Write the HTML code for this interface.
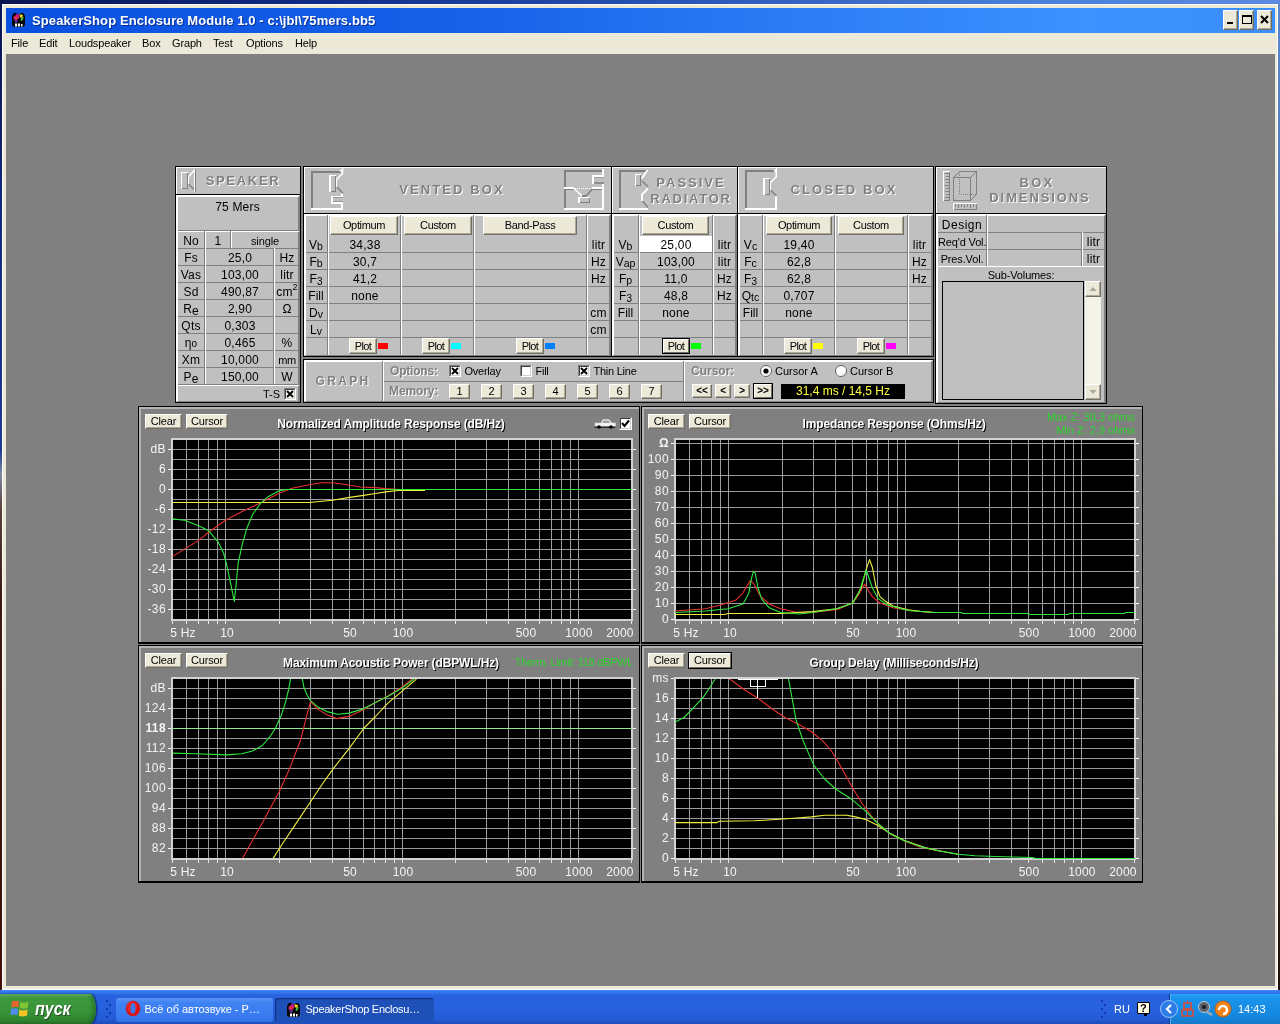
<!DOCTYPE html><html><head><meta charset="utf-8"><title>SpeakerShop Enclosure Module 1.0</title><style>
html,body{margin:0;padding:0;}
body{width:1280px;height:1024px;overflow:hidden;background:#808080;position:relative;
 font-family:"Liberation Sans",sans-serif;font-size:12px;color:#000;}
div{position:absolute;box-sizing:border-box;white-space:nowrap;}
svg{position:absolute;overflow:visible;}
.t{text-align:center;letter-spacing:0.2px;}
.l{text-align:left;}
.r{text-align:right;}
.pn{background:#c0c0c0;border:1px solid #000;}
.pn:before{content:"";position:absolute;left:0;top:0;right:0;bottom:0;border-top:2px solid #fff;border-left:2px solid #fff;border-right:2px solid #808080;border-bottom:1px solid #808080;}
.hd{background:#c0c0c0;border:1px solid #000;}
.hd:before{content:"";position:absolute;left:0;top:0;right:0;bottom:0;border-top:1px solid #fff;border-left:1px solid #fff;}
.btn{background:#ece9d8;border-top:1px solid #fff;border-left:1px solid #fff;border-right:1px solid #716f64;border-bottom:1px solid #716f64;text-align:center;}
.btn:before{content:"";position:absolute;left:0;top:0;right:0;bottom:0;border-right:1px solid #aca899;border-bottom:1px solid #aca899;}
.btnf{background:#ece9d8;border:1px solid #000;text-align:center;}
.btnf:before{content:"";position:absolute;left:0;top:0;right:0;bottom:0;border-top:1px solid #fff;border-left:1px solid #fff;border-right:1px solid #716f64;border-bottom:1px solid #716f64;}
.emb{color:#808080;font-weight:bold;font-size:13px;text-shadow:1px 1px 0 #fff;text-align:center;}
.gp{background:#808080;border:1px solid #000;border-bottom-width:2px;}
.gp:before{content:"";position:absolute;left:0;top:0;right:0;bottom:0;border-top:2px solid #b4b4b4;border-left:2px solid #b4b4b4;}
.gt{color:#fff;font-weight:bold;font-size:12px;letter-spacing:-0.13px;text-shadow:1px 1px 0 #000;text-align:center;}
.ax{color:#f4f4f4;font-size:12px;}
.gr{color:#2cd42c;font-size:11px;}
.hl{background:#808080;height:1px;}
.vl{width:2px;border-left:1px solid #808080;border-right:1px solid #fff;}
.cb{background:#fff;border-top:1px solid #808080;border-left:1px solid #808080;border-right:1px solid #fff;border-bottom:1px solid #fff;}
.cb:before{content:"";position:absolute;left:0;top:0;right:0;bottom:0;border-top:1px solid #404040;border-left:1px solid #404040;border-right:1px solid #d4d0c8;border-bottom:1px solid #d4d0c8;}
</style></head><body><div id="root" style="left:0;top:0;width:1280px;height:1024px;will-change:transform;">
<div style="left:0px;top:0px;width:1280px;height:5px;background:linear-gradient(90deg,#0a1550 0%,#0f2a86 25%,#2a58b8 55%,#4a7fd8 80%,#5a8ae0 100%);"></div>
<div style="left:0px;top:4px;width:3px;height:990px;background:linear-gradient(180deg,#0a1550 0%,#142c80 25%,#1a3a90 45%,#8088a0 47.5%,#584038 51%,#3a1810 60%,#401008 100%);"></div>
<div style="left:1277px;top:4px;width:3px;height:990px;background:linear-gradient(180deg,#5a86d0 0%,#5070b0 30%,#383850 60%,#281810 85%,#201008 100%);"></div>
<div style="left:2px;top:4px;width:1276px;height:986px;background:#ece9d8;border:1px solid #fff;"></div>
<div style="left:6px;top:8px;width:1269px;height:25px;background:linear-gradient(90deg,#0a50e0 0%,#1660e8 35%,#2a7af4 60%,#3c92ff 85%,#3a8ef8 100%);"></div>
<svg style="left:10px;top:11px" width="17" height="17" viewBox="0 0 17 17"><rect x="2" y="3" width="13" height="13" rx="3" fill="#080808"/><circle cx="5" cy="4" r="2.2" fill="#080808"/><circle cx="12" cy="4.5" r="2.4" fill="#080808"/><path d="M3.5 6 L7.5 2.5 L10 5 L7 9.5 L3.5 8.5 Z" fill="#c81890"/><path d="M9.5 3 L13 4 L12.5 7 L10 6.5 Z" fill="#e8d020"/><path d="M4 5.5 L9 6.5 L8 8 L4.5 7.5Z" fill="#e03828"/><path d="M11 7 L14 6 L12 10 L10.5 9.5 Z" fill="#40c040"/><path d="M5 9 L8 10 L7 11.5 L4.5 11Z" fill="#7030c0"/><rect x="5" y="12.5" width="2" height="3" fill="#fff"/><rect x="8" y="12.5" width="2" height="3" fill="#fff"/><rect x="11" y="13" width="1.5" height="2.5" fill="#fff"/></svg>
<div class="l" style="left:32px;top:8px;width:400px;height:25px;line-height:25px;color:#fff;font-weight:bold;font-size:13px;letter-spacing:0.1px;text-shadow:1px 1px 0 rgba(0,20,90,.6);">SpeakerShop Enclosure Module 1.0 - c:\jbl\75mers.bb5</div>
<div class="btn" style="left:1223px;top:10px;width:15px;height:20px;"></div>
<div class="btn" style="left:1239px;top:10px;width:15px;height:20px;"></div>
<div class="btn" style="left:1257px;top:10px;width:15px;height:20px;"></div>
<svg style="left:1223px;top:10px" width="50" height="20" viewBox="0 0 50 20"><rect x="4" y="12" width="6" height="2" fill="#000"/><rect x="19.5" y="5.5" width="9" height="8" fill="none" stroke="#000" stroke-width="1"/><rect x="19" y="5" width="10" height="2" fill="#000"/><path d="M38 6 L45 13 M45 6 L38 13" stroke="#000" stroke-width="2" fill="none"/></svg>
<div style="left:6px;top:33px;width:1269px;height:21px;background:#ece9d8;"></div>
<div style="left:6px;top:54px;width:1269px;height:932px;background:#808080;"></div>
<div class="l" style="left:11px;top:34px;width:16px;height:19px;line-height:19px;font-size:11px;letter-spacing:-0.15px;">File</div>
<div class="l" style="left:39px;top:34px;width:18px;height:19px;line-height:19px;font-size:11px;letter-spacing:-0.15px;">Edit</div>
<div class="l" style="left:69px;top:34px;width:61px;height:19px;line-height:19px;font-size:11px;letter-spacing:-0.15px;">Loudspeaker</div>
<div class="l" style="left:142px;top:34px;width:18px;height:19px;line-height:19px;font-size:11px;letter-spacing:-0.15px;">Box</div>
<div class="l" style="left:172px;top:34px;width:29px;height:19px;line-height:19px;font-size:11px;letter-spacing:-0.15px;">Graph</div>
<div class="l" style="left:213px;top:34px;width:21px;height:19px;line-height:19px;font-size:11px;letter-spacing:-0.15px;">Test</div>
<div class="l" style="left:246px;top:34px;width:37px;height:19px;line-height:19px;font-size:11px;letter-spacing:-0.15px;">Options</div>
<div class="l" style="left:295px;top:34px;width:21px;height:19px;line-height:19px;font-size:11px;letter-spacing:-0.15px;">Help</div>
<div class="hd" style="left:175px;top:166px;width:126px;height:29px;"></div>
<div class="pn" style="left:175px;top:194px;width:126px;height:209px;"></div>
<div class="emb" style="left:203px;top:174px;width:80px;height:14px;line-height:14px;letter-spacing:1.7px;font-size:13px;">SPEAKER</div>
<svg style="left:175px;top:165px" width="30" height="30" viewBox="0 0 30 30"><g shape-rendering="crispEdges"><rect x="6" y="7" width="1" height="17" fill="#fff"/><rect x="6" y="7" width="7" height="1" fill="#fff"/><rect x="12" y="8" width="1" height="16" fill="#808080"/><rect x="7" y="23" width="6" height="1" fill="#808080"/><rect x="13" y="12" width="1" height="7" fill="#fff"/><rect x="19" y="4" width="1" height="23" fill="#fff"/><rect x="20" y="4" width="1" height="23" fill="#808080"/></g><path d="M13.5 12 L19 5.5" stroke="#fff" stroke-width="1.2" fill="none"/><path d="M14 19.5 L19 24.5" stroke="#808080" stroke-width="1.2" fill="none"/></svg>
<div class="t" style="left:177px;top:198px;width:121px;height:18px;line-height:18px;font-size:12px;">75 Mers</div>
<div class="hl" style="left:178px;top:230px;width:121px"></div>
<div style="left:178px;top:231px;width:121px;height:1px;background:#fff;"></div>
<div class="t" style="left:178px;top:233px;width:26px;height:16px;line-height:16px;">No</div>
<div class="t" style="left:206px;top:233px;width:24px;height:16px;line-height:16px;">1</div>
<div class="t" style="left:232px;top:233px;width:66px;height:16px;line-height:16px;font-size:11px;letter-spacing:-0.1px;">single</div>
<div class="hl" style="left:178px;top:248px;width:121px"></div>
<div class="t" style="left:178px;top:250px;width:26px;height:16px;line-height:16px;">Fs</div>
<div class="t" style="left:206px;top:250px;width:68px;height:16px;line-height:16px;">25,0</div>
<div class="t" style="left:275px;top:250px;width:24px;height:16px;line-height:16px;">Hz</div>
<div class="hl" style="left:178px;top:265px;width:121px"></div>
<div class="t" style="left:178px;top:267px;width:26px;height:16px;line-height:16px;">Vas</div>
<div class="t" style="left:206px;top:267px;width:68px;height:16px;line-height:16px;">103,00</div>
<div class="t" style="left:275px;top:267px;width:24px;height:16px;line-height:16px;">litr</div>
<div class="hl" style="left:178px;top:282px;width:121px"></div>
<div class="t" style="left:178px;top:284px;width:26px;height:16px;line-height:16px;">Sd</div>
<div class="t" style="left:206px;top:284px;width:68px;height:16px;line-height:16px;">490,87</div>
<div class="t" style="left:275px;top:284px;width:24px;height:16px;line-height:16px;">cm<sup style='font-size:9px;line-height:0;position:relative;top:-1px'>2</sup></div>
<div class="hl" style="left:178px;top:299px;width:121px"></div>
<div class="t" style="left:178px;top:301px;width:26px;height:16px;line-height:16px;">R<span style='position:relative;top:2px'>e</span></div>
<div class="t" style="left:206px;top:301px;width:68px;height:16px;line-height:16px;">2,90</div>
<div class="t" style="left:275px;top:301px;width:24px;height:16px;line-height:16px;">Ω</div>
<div class="hl" style="left:178px;top:316px;width:121px"></div>
<div class="t" style="left:178px;top:318px;width:26px;height:16px;line-height:16px;">Qts</div>
<div class="t" style="left:206px;top:318px;width:68px;height:16px;line-height:16px;">0,303</div>
<div class="t" style="left:275px;top:318px;width:24px;height:16px;line-height:16px;"></div>
<div class="hl" style="left:178px;top:333px;width:121px"></div>
<div class="t" style="left:178px;top:335px;width:26px;height:16px;line-height:16px;">η<span style='font-size:10px'>o</span></div>
<div class="t" style="left:206px;top:335px;width:68px;height:16px;line-height:16px;">0,465</div>
<div class="t" style="left:275px;top:335px;width:24px;height:16px;line-height:16px;">%</div>
<div class="hl" style="left:178px;top:350px;width:121px"></div>
<div class="t" style="left:178px;top:352px;width:26px;height:16px;line-height:16px;">Xm</div>
<div class="t" style="left:206px;top:352px;width:68px;height:16px;line-height:16px;">10,000</div>
<div class="t" style="left:275px;top:352px;width:24px;height:16px;line-height:16px;"><span style='font-size:11px;letter-spacing:-0.5px'>mm</span></div>
<div class="hl" style="left:178px;top:367px;width:121px"></div>
<div class="t" style="left:178px;top:369px;width:26px;height:16px;line-height:16px;">P<span style='position:relative;top:2px'>e</span></div>
<div class="t" style="left:206px;top:369px;width:68px;height:16px;line-height:16px;">150,00</div>
<div class="t" style="left:275px;top:369px;width:24px;height:16px;line-height:16px;">W</div>
<div class="hl" style="left:178px;top:384px;width:121px"></div>
<div class="vl" style="left:204px;top:231px;height:153px"></div>
<div class="vl" style="left:230px;top:231px;height:17px"></div>
<div class="vl" style="left:273px;top:248px;height:136px"></div>
<div style="left:178px;top:385px;width:121px;height:1px;background:#fff;"></div>
<div class="r" style="left:254px;top:386px;width:26px;height:16px;line-height:16px;font-size:11px;">T-S</div>
<div class="cb" style="left:284px;top:388px;width:12px;height:12px;"></div>
<svg style="left:284px;top:388px" width="12" height="12"><path d="M3 3 L9 9 M9 3 L3 9" stroke="#000" stroke-width="2"/></svg>
<div class="hd" style="left:303px;top:166px;width:309px;height:48px;"></div>
<div class="pn" style="left:303px;top:213px;width:309px;height:144px;"></div>
<div class="emb" style="left:392px;top:183px;width:120px;height:14px;line-height:14px;letter-spacing:2.1px;font-size:13px;">VENTED BOX</div>
<div class="t" style="left:305px;top:237px;width:22px;height:16px;line-height:16px;letter-spacing:0;">V<span style='font-size:10.5px;position:relative;top:1px'>b</span></div>
<div class="t" style="left:330px;top:237px;width:70px;height:16px;line-height:16px;">34,38</div>
<div class="t" style="left:588px;top:237px;width:21px;height:16px;line-height:16px;">litr</div>
<div class="hl" style="left:306px;top:252px;width:303px"></div>
<div class="t" style="left:305px;top:254px;width:22px;height:16px;line-height:16px;letter-spacing:0;">F<span style='font-size:10.5px;position:relative;top:1px'>b</span></div>
<div class="t" style="left:330px;top:254px;width:70px;height:16px;line-height:16px;">30,7</div>
<div class="t" style="left:588px;top:254px;width:21px;height:16px;line-height:16px;">Hz</div>
<div class="hl" style="left:306px;top:269px;width:303px"></div>
<div class="t" style="left:305px;top:271px;width:22px;height:16px;line-height:16px;letter-spacing:0;">F<span style='font-size:10px;position:relative;top:2px'>3</span></div>
<div class="t" style="left:330px;top:271px;width:70px;height:16px;line-height:16px;">41,2</div>
<div class="t" style="left:588px;top:271px;width:21px;height:16px;line-height:16px;">Hz</div>
<div class="hl" style="left:306px;top:286px;width:303px"></div>
<div class="t" style="left:305px;top:288px;width:22px;height:16px;line-height:16px;letter-spacing:0;">Fill</div>
<div class="t" style="left:330px;top:288px;width:70px;height:16px;line-height:16px;">none</div>
<div class="t" style="left:588px;top:288px;width:21px;height:16px;line-height:16px;"></div>
<div class="hl" style="left:306px;top:303px;width:303px"></div>
<div class="t" style="left:305px;top:305px;width:22px;height:16px;line-height:16px;letter-spacing:0;">D<span style='font-size:10.5px;position:relative;top:1px'>v</span></div>
<div class="t" style="left:330px;top:305px;width:70px;height:16px;line-height:16px;"></div>
<div class="t" style="left:588px;top:305px;width:21px;height:16px;line-height:16px;">cm</div>
<div class="hl" style="left:306px;top:320px;width:303px"></div>
<div class="t" style="left:305px;top:322px;width:22px;height:16px;line-height:16px;letter-spacing:0;">L<span style='font-size:10.5px;position:relative;top:1px'>v</span></div>
<div class="t" style="left:330px;top:322px;width:70px;height:16px;line-height:16px;"></div>
<div class="t" style="left:588px;top:322px;width:21px;height:16px;line-height:16px;">cm</div>
<div class="hl" style="left:306px;top:337px;width:303px"></div>
<div class="vl" style="left:327px;top:215px;height:140px"></div>
<div class="vl" style="left:400px;top:215px;height:140px"></div>
<div class="vl" style="left:473px;top:215px;height:140px"></div>
<div class="vl" style="left:586px;top:215px;height:140px"></div>
<div class="btn" style="left:330px;top:216px;width:68px;height:17px;line-height:17px;font-size:11px;letter-spacing:-0.35px;height:19px;">Optimum</div>
<div class="btn" style="left:404px;top:216px;width:68px;height:17px;line-height:17px;font-size:11px;letter-spacing:-0.35px;height:19px;">Custom</div>
<div class="btn" style="left:483px;top:216px;width:94px;height:17px;line-height:17px;font-size:11px;letter-spacing:-0.35px;height:19px;">Band-Pass</div>
<div class="btn" style="left:349px;top:338px;width:28px;height:14px;line-height:14px;font-size:11px;letter-spacing:-0.6px;height:16px;">Plot</div>
<div style="left:378px;top:343px;width:10px;height:6px;background:#ff0000;"></div>
<div class="btn" style="left:422px;top:338px;width:28px;height:14px;line-height:14px;font-size:11px;letter-spacing:-0.6px;height:16px;">Plot</div>
<div style="left:451px;top:343px;width:10px;height:6px;background:#00ffff;"></div>
<div class="btn" style="left:516px;top:338px;width:28px;height:14px;line-height:14px;font-size:11px;letter-spacing:-0.6px;height:16px;">Plot</div>
<div style="left:545px;top:343px;width:10px;height:6px;background:#0080ff;"></div>
<div class="hd" style="left:611px;top:166px;width:127px;height:48px;"></div>
<div class="pn" style="left:611px;top:213px;width:127px;height:144px;"></div>
<div class="emb" style="left:650px;top:176px;width:82px;height:14px;line-height:14px;letter-spacing:2.0px;font-size:13px;">PASSIVE</div>
<div class="emb" style="left:645px;top:192px;width:92px;height:14px;line-height:14px;letter-spacing:1.75px;font-size:13px;">RADIATOR</div>
<div style="left:640px;top:236px;width:72px;height:16px;background:#fff;"></div>
<div class="t" style="left:613px;top:237px;width:25px;height:16px;line-height:16px;letter-spacing:0;">V<span style='font-size:10.5px;position:relative;top:1px'>b</span></div>
<div class="t" style="left:640px;top:237px;width:72px;height:16px;line-height:16px;">25,00</div>
<div class="t" style="left:714px;top:237px;width:21px;height:16px;line-height:16px;">litr</div>
<div class="hl" style="left:614px;top:252px;width:121px"></div>
<div class="t" style="left:613px;top:254px;width:25px;height:16px;line-height:16px;letter-spacing:0;">V<span style='font-size:10.5px;position:relative;top:1px'>ap</span></div>
<div class="t" style="left:640px;top:254px;width:72px;height:16px;line-height:16px;">103,00</div>
<div class="t" style="left:714px;top:254px;width:21px;height:16px;line-height:16px;">litr</div>
<div class="hl" style="left:614px;top:269px;width:121px"></div>
<div class="t" style="left:613px;top:271px;width:25px;height:16px;line-height:16px;letter-spacing:0;">F<span style='font-size:10.5px;position:relative;top:1px'>p</span></div>
<div class="t" style="left:640px;top:271px;width:72px;height:16px;line-height:16px;">11,0</div>
<div class="t" style="left:714px;top:271px;width:21px;height:16px;line-height:16px;">Hz</div>
<div class="hl" style="left:614px;top:286px;width:121px"></div>
<div class="t" style="left:613px;top:288px;width:25px;height:16px;line-height:16px;letter-spacing:0;">F<span style='font-size:10px;position:relative;top:2px'>3</span></div>
<div class="t" style="left:640px;top:288px;width:72px;height:16px;line-height:16px;">48,8</div>
<div class="t" style="left:714px;top:288px;width:21px;height:16px;line-height:16px;">Hz</div>
<div class="hl" style="left:614px;top:303px;width:121px"></div>
<div class="t" style="left:613px;top:305px;width:25px;height:16px;line-height:16px;letter-spacing:0;">Fill</div>
<div class="t" style="left:640px;top:305px;width:72px;height:16px;line-height:16px;">none</div>
<div class="t" style="left:714px;top:305px;width:21px;height:16px;line-height:16px;"></div>
<div class="hl" style="left:614px;top:320px;width:121px"></div>
<div class="t" style="left:613px;top:322px;width:25px;height:16px;line-height:16px;letter-spacing:0;"></div>
<div class="t" style="left:640px;top:322px;width:72px;height:16px;line-height:16px;"></div>
<div class="t" style="left:714px;top:322px;width:21px;height:16px;line-height:16px;"></div>
<div class="hl" style="left:614px;top:337px;width:121px"></div>
<div class="vl" style="left:638px;top:215px;height:140px"></div>
<div class="vl" style="left:712px;top:215px;height:140px"></div>
<div class="btn" style="left:642px;top:216px;width:67px;height:17px;line-height:17px;font-size:11px;letter-spacing:-0.35px;height:19px;">Custom</div>
<div class="btnf" style="left:662px;top:338px;width:28px;height:14px;line-height:14px;font-size:11px;letter-spacing:-0.6px;height:16px;">Plot</div>
<div style="left:691px;top:343px;width:10px;height:6px;background:#00ff00;"></div>
<div class="hd" style="left:737px;top:166px;width:197px;height:48px;"></div>
<div class="pn" style="left:737px;top:213px;width:197px;height:144px;"></div>
<div class="emb" style="left:786px;top:183px;width:116px;height:14px;line-height:14px;letter-spacing:2.1px;font-size:13px;">CLOSED BOX</div>
<div class="t" style="left:739px;top:237px;width:23px;height:16px;line-height:16px;letter-spacing:0;">V<span style='font-size:10.5px;position:relative;top:1px'>c</span></div>
<div class="t" style="left:765px;top:237px;width:68px;height:16px;line-height:16px;">19,40</div>
<div class="t" style="left:909px;top:237px;width:21px;height:16px;line-height:16px;">litr</div>
<div class="hl" style="left:740px;top:252px;width:191px"></div>
<div class="t" style="left:739px;top:254px;width:23px;height:16px;line-height:16px;letter-spacing:0;">F<span style='font-size:10.5px;position:relative;top:1px'>c</span></div>
<div class="t" style="left:765px;top:254px;width:68px;height:16px;line-height:16px;">62,8</div>
<div class="t" style="left:909px;top:254px;width:21px;height:16px;line-height:16px;">Hz</div>
<div class="hl" style="left:740px;top:269px;width:191px"></div>
<div class="t" style="left:739px;top:271px;width:23px;height:16px;line-height:16px;letter-spacing:0;">F<span style='font-size:10px;position:relative;top:2px'>3</span></div>
<div class="t" style="left:765px;top:271px;width:68px;height:16px;line-height:16px;">62,8</div>
<div class="t" style="left:909px;top:271px;width:21px;height:16px;line-height:16px;">Hz</div>
<div class="hl" style="left:740px;top:286px;width:191px"></div>
<div class="t" style="left:739px;top:288px;width:23px;height:16px;line-height:16px;letter-spacing:0;">Q<span style='font-size:10.5px;position:relative;top:1px'>tc</span></div>
<div class="t" style="left:765px;top:288px;width:68px;height:16px;line-height:16px;">0,707</div>
<div class="t" style="left:909px;top:288px;width:21px;height:16px;line-height:16px;"></div>
<div class="hl" style="left:740px;top:303px;width:191px"></div>
<div class="t" style="left:739px;top:305px;width:23px;height:16px;line-height:16px;letter-spacing:0;">Fill</div>
<div class="t" style="left:765px;top:305px;width:68px;height:16px;line-height:16px;">none</div>
<div class="t" style="left:909px;top:305px;width:21px;height:16px;line-height:16px;"></div>
<div class="hl" style="left:740px;top:320px;width:191px"></div>
<div class="t" style="left:739px;top:322px;width:23px;height:16px;line-height:16px;letter-spacing:0;"></div>
<div class="t" style="left:765px;top:322px;width:68px;height:16px;line-height:16px;"></div>
<div class="t" style="left:909px;top:322px;width:21px;height:16px;line-height:16px;"></div>
<div class="hl" style="left:740px;top:337px;width:191px"></div>
<div class="vl" style="left:762px;top:215px;height:140px"></div>
<div class="vl" style="left:834px;top:215px;height:140px"></div>
<div class="vl" style="left:907px;top:215px;height:140px"></div>
<div class="btn" style="left:766px;top:216px;width:66px;height:17px;line-height:17px;font-size:11px;letter-spacing:-0.35px;height:19px;">Optimum</div>
<div class="btn" style="left:838px;top:216px;width:66px;height:17px;line-height:17px;font-size:11px;letter-spacing:-0.35px;height:19px;">Custom</div>
<div class="btn" style="left:784px;top:338px;width:28px;height:14px;line-height:14px;font-size:11px;letter-spacing:-0.6px;height:16px;">Plot</div>
<div style="left:813px;top:343px;width:10px;height:6px;background:#ffff00;"></div>
<div class="btn" style="left:857px;top:338px;width:28px;height:14px;line-height:14px;font-size:11px;letter-spacing:-0.6px;height:16px;">Plot</div>
<div style="left:886px;top:343px;width:10px;height:6px;background:#ff00ff;"></div>
<div class="pn" style="left:303px;top:359px;width:631px;height:44px;"></div>
<div class="emb" style="left:309px;top:374px;width:68px;height:14px;line-height:14px;letter-spacing:2.3px;font-size:12px;">GRAPH</div>
<div class="vl" style="left:382px;top:361px;height:40px"></div>
<div class="vl" style="left:683px;top:361px;height:40px"></div>
<div class="hl" style="left:384px;top:381px;width:299px"></div>
<div class="l" style="left:390px;top:363px;width:60px;height:17px;line-height:17px;color:#808080;font-weight:bold;text-shadow:1px 1px 0 #fff;font-size:12px;letter-spacing:-0.2px;">Options:</div>
<div class="l" style="left:389px;top:383px;width:60px;height:17px;line-height:17px;color:#808080;font-weight:bold;text-shadow:1px 1px 0 #fff;font-size:12px;letter-spacing:-0.1px;">Memory:</div>
<div class="cb" style="left:449px;top:365px;width:12px;height:12px;"></div>
<svg style="left:449px;top:365px" width="12" height="12"><path d="M3 3 L9 9 M9 3 L3 9" stroke="#000" stroke-width="2"/></svg>
<div class="l" style="left:464.5px;top:363px;width:60px;height:16px;line-height:16px;font-size:11px;letter-spacing:-0.25px;">Overlay</div>
<div class="cb" style="left:520px;top:365px;width:12px;height:12px;"></div>
<div class="l" style="left:535.5px;top:363px;width:60px;height:16px;line-height:16px;font-size:11px;letter-spacing:-0.25px;">Fill</div>
<div class="cb" style="left:578px;top:365px;width:12px;height:12px;"></div>
<svg style="left:578px;top:365px" width="12" height="12"><path d="M3 3 L9 9 M9 3 L3 9" stroke="#000" stroke-width="2"/></svg>
<div class="l" style="left:593.5px;top:363px;width:60px;height:16px;line-height:16px;font-size:11px;letter-spacing:-0.25px;">Thin Line</div>
<div class="btn" style="left:449px;top:384px;width:21px;height:13px;line-height:13px;font-size:11px;letter-spacing:-0.2px;height:15px;">1</div>
<div class="btn" style="left:481px;top:384px;width:21px;height:13px;line-height:13px;font-size:11px;letter-spacing:-0.2px;height:15px;">2</div>
<div class="btn" style="left:513px;top:384px;width:21px;height:13px;line-height:13px;font-size:11px;letter-spacing:-0.2px;height:15px;">3</div>
<div class="btn" style="left:545px;top:384px;width:21px;height:13px;line-height:13px;font-size:11px;letter-spacing:-0.2px;height:15px;">4</div>
<div class="btn" style="left:577px;top:384px;width:21px;height:13px;line-height:13px;font-size:11px;letter-spacing:-0.2px;height:15px;">5</div>
<div class="btn" style="left:609px;top:384px;width:21px;height:13px;line-height:13px;font-size:11px;letter-spacing:-0.2px;height:15px;">6</div>
<div class="btn" style="left:641px;top:384px;width:21px;height:13px;line-height:13px;font-size:11px;letter-spacing:-0.2px;height:15px;">7</div>
<div class="l" style="left:691px;top:363px;width:60px;height:17px;line-height:17px;color:#808080;font-weight:bold;text-shadow:1px 1px 0 #fff;font-size:12px;">Cursor:</div>
<svg style="left:760px;top:365px" width="12" height="12"><circle cx="6" cy="6" r="5.5" fill="#fff" stroke="#606060"/><path d="M2 9.5 A5.5 5.5 0 0 0 10 2.5" fill="none" stroke="#e8e8e8"/><circle cx="6" cy="6" r="2.6" fill="#000"/></svg>
<div class="l" style="left:775px;top:363px;width:60px;height:16px;line-height:16px;font-size:11px;">Cursor A</div>
<svg style="left:835px;top:365px" width="12" height="12"><circle cx="6" cy="6" r="5.5" fill="#fff" stroke="#606060"/><path d="M2 9.5 A5.5 5.5 0 0 0 10 2.5" fill="none" stroke="#e8e8e8"/></svg>
<div class="l" style="left:850px;top:363px;width:60px;height:16px;line-height:16px;font-size:11px;">Cursor B</div>
<div class="btn" style="left:692px;top:384px;width:20px;height:12px;line-height:12px;font-size:10px;letter-spacing:-0.2px;height:14px;"><b>&lt;&lt;</b></div>
<div class="btn" style="left:715px;top:384px;width:16px;height:12px;line-height:12px;font-size:10px;letter-spacing:-0.2px;height:14px;"><b>&lt;</b></div>
<div class="btn" style="left:734px;top:384px;width:16px;height:12px;line-height:12px;font-size:10px;letter-spacing:-0.2px;height:14px;"><b>&gt;</b></div>
<div class="btnf" style="left:753px;top:383px;width:20px;height:14px;line-height:14px;font-size:10px;letter-spacing:-0.2px;height:16px;"><b>&gt;&gt;</b></div>
<div style="left:781px;top:384px;width:124px;height:15px;background:#000;"></div>
<div class="t" style="left:781px;top:384px;width:124px;height:15px;line-height:15px;color:#ffff40;font-size:12px;letter-spacing:0;">31,4 ms / 14,5 Hz</div>
<div class="hd" style="left:935px;top:166px;width:172px;height:48px;"></div>
<div class="pn" style="left:935px;top:213px;width:172px;height:191px;"></div>
<div class="emb" style="left:1002px;top:176px;width:70px;height:14px;line-height:14px;letter-spacing:2.2px;font-size:13px;">BOX</div>
<div class="emb" style="left:985px;top:191px;width:110px;height:14px;line-height:14px;letter-spacing:1.9px;font-size:13px;">DIMENSIONS</div>
<div class="t" style="left:938px;top:217px;width:48px;height:16px;line-height:16px;font-size:12px;letter-spacing:0.5px;">Design</div>
<div class="t" style="left:1083px;top:217px;width:21px;height:16px;line-height:16px;"></div>
<div class="hl" style="left:938px;top:232px;width:166px"></div>
<div class="t" style="left:938px;top:234px;width:48px;height:16px;line-height:16px;font-size:11px;letter-spacing:-0.15px;">Req'd Vol.</div>
<div class="t" style="left:1083px;top:234px;width:21px;height:16px;line-height:16px;">litr</div>
<div class="hl" style="left:938px;top:249px;width:166px"></div>
<div class="t" style="left:938px;top:251px;width:48px;height:16px;line-height:16px;font-size:11px;letter-spacing:-0.15px;">Pres.Vol.</div>
<div class="t" style="left:1083px;top:251px;width:21px;height:16px;line-height:16px;">litr</div>
<div class="hl" style="left:938px;top:266px;width:166px"></div>
<div class="vl" style="left:986px;top:215px;height:51px"></div>
<div class="vl" style="left:1081px;top:232px;height:34px"></div>
<div style="left:938px;top:266px;width:166px;height:1px;background:#fff;"></div>
<div class="t" style="left:938px;top:268px;width:166px;height:14px;line-height:14px;font-size:11px;letter-spacing:-0.15px;">Sub-Volumes:</div>
<div style="left:942px;top:281px;width:142px;height:119px;border:1px solid #000;background:#c0c0c0;"></div>
<div style="left:1085px;top:281px;width:16px;height:119px;background:#f4f3ea;"></div>
<div class="btn" style="left:1085px;top:281px;width:16px;height:16px;"></div>
<div class="btn" style="left:1085px;top:384px;width:16px;height:16px;"></div>
<svg style="left:1085px;top:281px" width="16" height="119"><path d="M4.5 10 L8 6 L11.5 10 Z" fill="#aca899"/><path d="M4.5 109 L8 113 L11.5 109 Z" fill="#aca899"/></svg>
<svg style="left:304px;top:166px" width="50" height="48" viewBox="0 0 50 48"><g shape-rendering="crispEdges"><rect x="7" y="5" width="30" height="2" fill="#808080"/><rect x="7" y="5" width="2" height="38" fill="#808080"/><rect x="7" y="42" width="32" height="2" fill="#fff"/><rect x="37" y="37" width="2" height="6" fill="#fff"/><rect x="27" y="36" width="12" height="2" fill="#fff"/><rect x="27" y="30" width="2" height="7" fill="#fff"/><rect x="27" y="30" width="12" height="1" fill="#fff"/><rect x="29" y="31" width="10" height="1" fill="#808080" opacity=".6"/><rect x="29" y="35" width="10" height="1" fill="#808080" opacity=".7"/><rect x="37" y="27" width="2" height="4" fill="#fff"/><rect x="25" y="9" width="2" height="17" fill="#fff"/><rect x="25" y="9" width="7" height="1" fill="#fff"/><rect x="31" y="10" width="1" height="16" fill="#808080"/><rect x="27" y="25" width="5" height="1" fill="#808080"/><rect x="32" y="13" width="1" height="8" fill="#fff"/></g><path d="M32.5 13.5 L38.5 7.5 V3.5 L36 5.5" stroke="#fff" stroke-width="1.6" fill="none"/><path d="M33 21 L39 27.5" stroke="#808080" stroke-width="1.4" fill="none"/></svg>
<svg style="left:558px;top:166px" width="50" height="48" viewBox="0 0 50 48"><g shape-rendering="crispEdges"><rect x="6" y="4" width="38" height="2" fill="#808080"/><rect x="6" y="4" width="2" height="39" fill="#808080"/><rect x="6" y="42" width="40" height="2" fill="#fff"/><rect x="44" y="18" width="2" height="25" fill="#fff"/><rect x="34" y="9" width="12" height="2" fill="#fff"/><rect x="34" y="9" width="2" height="9" fill="#fff"/><rect x="44" y="3" width="2" height="7" fill="#fff"/><rect x="36" y="11" width="10" height="1" fill="#808080" opacity=".5"/><rect x="36" y="16" width="10" height="2" fill="#808080" opacity=".8"/><rect x="6" y="21" width="10" height="2" fill="#fff"/><rect x="8" y="23" width="8" height="1" fill="#808080"/><rect x="34" y="21" width="10" height="2" fill="#fff"/><rect x="34" y="23" width="10" height="1" fill="#808080"/><rect x="17" y="22" width="1" height="1" fill="#fff"/><rect x="19" y="22" width="1" height="1" fill="#fff"/><rect x="21" y="22" width="1" height="1" fill="#fff"/><rect x="23" y="22" width="1" height="1" fill="#fff"/><rect x="25" y="22" width="1" height="1" fill="#fff"/><rect x="27" y="22" width="1" height="1" fill="#fff"/><rect x="29" y="22" width="1" height="1" fill="#fff"/><rect x="31" y="22" width="1" height="1" fill="#fff"/><rect x="33" y="22" width="1" height="1" fill="#fff"/><rect x="20" y="31" width="2" height="6" fill="#fff"/><rect x="20" y="31" width="12" height="1" fill="#fff"/><rect x="31" y="32" width="1" height="5" fill="#808080"/><rect x="22" y="36" width="10" height="1" fill="#808080"/><rect x="24" y="29" width="4" height="2" fill="#808080"/></g><path d="M16 22.5 L24 30" stroke="#fff" stroke-width="1.6" fill="none"/><path d="M28 30 L34.5 23" stroke="#808080" stroke-width="1.6" fill="none"/></svg>
<svg style="left:612px;top:166px" width="50" height="48" viewBox="0 0 50 48"><g shape-rendering="crispEdges"><rect x="7" y="4" width="27" height="2" fill="#808080"/><rect x="7" y="4" width="2" height="39" fill="#808080"/><rect x="7" y="42" width="29" height="2" fill="#fff"/><rect x="23" y="8" width="1" height="12" fill="#fff"/><rect x="23" y="8" width="6" height="1" fill="#fff"/><rect x="28" y="9" width="1" height="11" fill="#808080"/><rect x="24" y="19" width="5" height="1" fill="#808080"/><rect x="29" y="28" width="2" height="7" fill="#fff"/></g><path d="M35.5 4 L29.8 12.5" stroke="#fff" stroke-width="1.8" fill="none"/><path d="M30 15 L36 20.5" stroke="#808080" stroke-width="1.4" fill="none"/><path d="M36 22.5 L30 28.5" stroke="#fff" stroke-width="1.8" fill="none"/><path d="M30.5 35 L36 41.5" stroke="#808080" stroke-width="1.4" fill="none"/></svg>
<svg style="left:738px;top:166px" width="50" height="48" viewBox="0 0 50 48"><g shape-rendering="crispEdges"><rect x="7" y="4" width="30" height="2" fill="#808080"/><rect x="7" y="4" width="2" height="39" fill="#808080"/><rect x="7" y="42" width="32" height="2" fill="#fff"/><rect x="37" y="30" width="2" height="13" fill="#fff"/><rect x="25" y="12" width="2" height="17" fill="#fff"/><rect x="25" y="12" width="7" height="1" fill="#fff"/><rect x="31" y="13" width="1" height="16" fill="#808080"/><rect x="27" y="28" width="5" height="1" fill="#808080"/><rect x="32" y="16" width="1" height="8" fill="#fff"/></g><path d="M32.5 16.5 L38.2 11 V3.5 L36 5.5" stroke="#fff" stroke-width="1.6" fill="none"/><path d="M33 24.5 L38.5 30" stroke="#808080" stroke-width="1.4" fill="none"/></svg>
<svg style="left:936px;top:166px" width="50" height="48" viewBox="0 0 50 48"><g shape-rendering="crispEdges"><rect x="7" y="5" width="1" height="30" fill="#fff"/><rect x="7" y="5" width="7" height="1" fill="#fff"/><rect x="13" y="6" width="1" height="29" fill="#808080"/><rect x="8" y="34" width="6" height="1" fill="#808080"/><rect x="9" y="7" width="4" height="1" fill="#808080"/><rect x="10" y="10" width="3" height="1" fill="#808080"/><rect x="9" y="13" width="4" height="1" fill="#808080"/><rect x="10" y="16" width="3" height="1" fill="#808080"/><rect x="9" y="19" width="4" height="1" fill="#808080"/><rect x="10" y="22" width="3" height="1" fill="#808080"/><rect x="9" y="25" width="4" height="1" fill="#808080"/><rect x="10" y="28" width="3" height="1" fill="#808080"/><rect x="9" y="31" width="4" height="1" fill="#808080"/><rect x="17" y="37" width="1" height="7" fill="#fff"/><rect x="17" y="37" width="24" height="1" fill="#fff"/><rect x="40" y="38" width="1" height="6" fill="#808080"/><rect x="18" y="43" width="23" height="1" fill="#808080"/><rect x="19" y="38" width="1" height="3" fill="#808080"/><rect x="22" y="38" width="1" height="4" fill="#808080"/><rect x="25" y="38" width="1" height="3" fill="#808080"/><rect x="28" y="38" width="1" height="4" fill="#808080"/><rect x="31" y="38" width="1" height="3" fill="#808080"/><rect x="34" y="38" width="1" height="4" fill="#808080"/><rect x="37" y="38" width="1" height="3" fill="#808080"/><rect x="17.5" y="11.5" width="17" height="23" fill="none" stroke="#808080"/><rect x="23" y="5" width="18" height="1" fill="#808080"/><rect x="40" y="5" width="1" height="24" fill="#808080"/><rect x="23" y="7" width="1" height="1" fill="#808080"/><rect x="23" y="9" width="1" height="1" fill="#808080"/><rect x="23" y="11" width="1" height="1" fill="#808080"/><rect x="23" y="13" width="1" height="1" fill="#808080"/><rect x="23" y="15" width="1" height="1" fill="#808080"/><rect x="23" y="17" width="1" height="1" fill="#808080"/><rect x="23" y="19" width="1" height="1" fill="#808080"/><rect x="23" y="21" width="1" height="1" fill="#808080"/><rect x="23" y="23" width="1" height="1" fill="#808080"/><rect x="23" y="25" width="1" height="1" fill="#808080"/><rect x="23" y="27" width="1" height="1" fill="#808080"/><rect x="25" y="28" width="1" height="1" fill="#808080"/><rect x="27" y="28" width="1" height="1" fill="#808080"/><rect x="29" y="28" width="1" height="1" fill="#808080"/><rect x="31" y="28" width="1" height="1" fill="#808080"/><rect x="33" y="28" width="1" height="1" fill="#808080"/><rect x="35" y="28" width="1" height="1" fill="#808080"/><rect x="37" y="28" width="1" height="1" fill="#808080"/><rect x="39" y="28" width="1" height="1" fill="#808080"/></g><path d="M17.5 11.5 L23.5 5.5 M34.5 11.5 L40.5 5.5 M34.5 34.5 L40.5 28.5" stroke="#808080" stroke-width="1" fill="none"/><path d="M17.5 34.5 L23.5 28.5" stroke="#808080" stroke-width="1" stroke-dasharray="1 1.5" fill="none" opacity=".6"/></svg>
<div class="gp" style="left:138px;top:406px;width:502px;height:238px;"></div>
<div class="btn" style="left:145px;top:414px;width:37px;height:13px;line-height:13px;font-size:11px;letter-spacing:-0.2px;height:15px;">Clear</div>
<div class="btn" style="left:186px;top:414px;width:42px;height:13px;line-height:13px;font-size:11px;letter-spacing:-0.2px;height:15px;">Cursor</div>
<div class="gt" style="left:140px;top:416px;width:502px;height:16px;line-height:16px;">Normalized Amplitude Response (dB/Hz)</div>
<svg style="left:171px;top:438px" width="468" height="189" viewBox="0 0 468 189" shape-rendering="crispEdges"><rect x="0" y="0" width="462" height="183" fill="#000"/><rect x="0" y="11" width="462" height="1" fill="#9a9a9a"/><rect x="0" y="21" width="462" height="1" fill="#9a9a9a"/><rect x="0" y="31" width="462" height="1" fill="#9a9a9a"/><rect x="0" y="41" width="462" height="1" fill="#9a9a9a"/><rect x="0" y="51" width="462" height="1" fill="#9a9a9a"/><rect x="0" y="61" width="462" height="1" fill="#9a9a9a"/><rect x="0" y="71" width="462" height="1" fill="#9a9a9a"/><rect x="0" y="81" width="462" height="1" fill="#9a9a9a"/><rect x="0" y="91" width="462" height="1" fill="#9a9a9a"/><rect x="0" y="101" width="462" height="1" fill="#9a9a9a"/><rect x="0" y="111" width="462" height="1" fill="#9a9a9a"/><rect x="0" y="121" width="462" height="1" fill="#9a9a9a"/><rect x="0" y="131" width="462" height="1" fill="#9a9a9a"/><rect x="0" y="141" width="462" height="1" fill="#9a9a9a"/><rect x="0" y="151" width="462" height="1" fill="#9a9a9a"/><rect x="0" y="161" width="462" height="1" fill="#9a9a9a"/><rect x="0" y="171" width="462" height="1" fill="#9a9a9a"/><rect x="1" y="0" width="1" height="183" fill="#9a9a9a"/><rect x="1" y="183" width="1" height="3" fill="#e8e8e8"/><rect x="15" y="0" width="1" height="183" fill="#9a9a9a"/><rect x="15" y="183" width="1" height="3" fill="#e8e8e8"/><rect x="27" y="0" width="1" height="183" fill="#9a9a9a"/><rect x="27" y="183" width="1" height="3" fill="#e8e8e8"/><rect x="37" y="0" width="1" height="183" fill="#9a9a9a"/><rect x="37" y="183" width="1" height="3" fill="#e8e8e8"/><rect x="46" y="0" width="1" height="183" fill="#9a9a9a"/><rect x="46" y="183" width="1" height="3" fill="#e8e8e8"/><rect x="54" y="0" width="1" height="183" fill="#9a9a9a"/><rect x="54" y="183" width="1" height="3" fill="#e8e8e8"/><rect x="108" y="0" width="1" height="183" fill="#9a9a9a"/><rect x="108" y="183" width="1" height="3" fill="#e8e8e8"/><rect x="139" y="0" width="1" height="183" fill="#9a9a9a"/><rect x="139" y="183" width="1" height="3" fill="#e8e8e8"/><rect x="161" y="0" width="1" height="183" fill="#9a9a9a"/><rect x="161" y="183" width="1" height="3" fill="#e8e8e8"/><rect x="178" y="0" width="1" height="183" fill="#9a9a9a"/><rect x="178" y="183" width="1" height="3" fill="#e8e8e8"/><rect x="192" y="0" width="1" height="183" fill="#9a9a9a"/><rect x="192" y="183" width="1" height="3" fill="#e8e8e8"/><rect x="203" y="0" width="1" height="183" fill="#9a9a9a"/><rect x="203" y="183" width="1" height="3" fill="#e8e8e8"/><rect x="214" y="0" width="1" height="183" fill="#9a9a9a"/><rect x="214" y="183" width="1" height="3" fill="#e8e8e8"/><rect x="223" y="0" width="1" height="183" fill="#9a9a9a"/><rect x="223" y="183" width="1" height="3" fill="#e8e8e8"/><rect x="231" y="0" width="1" height="183" fill="#9a9a9a"/><rect x="231" y="183" width="1" height="3" fill="#e8e8e8"/><rect x="284" y="0" width="1" height="183" fill="#9a9a9a"/><rect x="284" y="183" width="1" height="3" fill="#e8e8e8"/><rect x="315" y="0" width="1" height="183" fill="#9a9a9a"/><rect x="315" y="183" width="1" height="3" fill="#e8e8e8"/><rect x="337" y="0" width="1" height="183" fill="#9a9a9a"/><rect x="337" y="183" width="1" height="3" fill="#e8e8e8"/><rect x="354" y="0" width="1" height="183" fill="#9a9a9a"/><rect x="354" y="183" width="1" height="3" fill="#e8e8e8"/><rect x="368" y="0" width="1" height="183" fill="#9a9a9a"/><rect x="368" y="183" width="1" height="3" fill="#e8e8e8"/><rect x="380" y="0" width="1" height="183" fill="#9a9a9a"/><rect x="380" y="183" width="1" height="3" fill="#e8e8e8"/><rect x="390" y="0" width="1" height="183" fill="#9a9a9a"/><rect x="390" y="183" width="1" height="3" fill="#e8e8e8"/><rect x="399" y="0" width="1" height="183" fill="#9a9a9a"/><rect x="399" y="183" width="1" height="3" fill="#e8e8e8"/><rect x="407" y="0" width="1" height="183" fill="#9a9a9a"/><rect x="407" y="183" width="1" height="3" fill="#e8e8e8"/><rect x="460" y="0" width="1" height="183" fill="#9a9a9a"/><rect x="460" y="183" width="1" height="3" fill="#e8e8e8"/><rect x="0" y="0" width="462" height="2" fill="#d2d2d2"/><rect x="0" y="181" width="462" height="2" fill="#d2d2d2"/><rect x="0" y="0" width="2" height="183" fill="#d2d2d2"/><rect x="460" y="0" width="2" height="183" fill="#d2d2d2"/><rect x="-3" y="11" width="3" height="1" fill="#fff"/><rect x="462" y="11" width="3" height="1" fill="#fff"/><rect x="-3" y="31" width="3" height="1" fill="#fff"/><rect x="462" y="31" width="3" height="1" fill="#fff"/><rect x="-3" y="51" width="3" height="1" fill="#fff"/><rect x="462" y="51" width="3" height="1" fill="#fff"/><rect x="-3" y="71" width="3" height="1" fill="#fff"/><rect x="462" y="71" width="3" height="1" fill="#fff"/><rect x="-3" y="91" width="3" height="1" fill="#fff"/><rect x="462" y="91" width="3" height="1" fill="#fff"/><rect x="-3" y="111" width="3" height="1" fill="#fff"/><rect x="462" y="111" width="3" height="1" fill="#fff"/><rect x="-3" y="131" width="3" height="1" fill="#fff"/><rect x="462" y="131" width="3" height="1" fill="#fff"/><rect x="-3" y="151" width="3" height="1" fill="#fff"/><rect x="462" y="151" width="3" height="1" fill="#fff"/><rect x="-3" y="171" width="3" height="1" fill="#fff"/><rect x="462" y="171" width="3" height="1" fill="#fff"/></svg>
<svg style="left:172px;top:440px;overflow:hidden" width="460" height="180" viewBox="172 440 460 180"><path d="M172.4 556.6 L198.6 540.4 L209.9 531.2 L225.5 520.2 L243.1 511.1 L260.7 502.7 L278.7 493.5 L292.0 488.2 L309.5 484.7 L321.3 482.7 L332.4 482.7 L340.8 483.7 L349.6 485.3 L360.3 487.0 L375.5 487.6 L385.7 488.6 L400.0 489.5" fill="none" stroke="#e83030" stroke-width="1.1" stroke-linejoin="round"/><path d="M172.4 502.5 L309.5 502.5 L332.4 500.3 L349.6 497.4 L363.6 495.4 L375.5 493.5 L385.7 491.9 L398.0 490.5 L425.0 490.5" fill="none" stroke="#f0f040" stroke-width="1.1" stroke-linejoin="round"/><path d="M172.4 518.9 L184.5 520.2 L198.6 525.7 L208.4 530.6 L217.7 541.3 L223.6 553.0 L227.1 566.7 L230.4 582.3 L234.3 601.5 L236.3 582.3 L238.2 562.8 L242.1 545.2 L247.0 527.7 L252.9 514.0 L260.7 503.2 L268.5 496.4 L278.7 490.9 L286.0 489.5 L634.0 489.5" fill="none" stroke="#30e840" stroke-width="1.1" stroke-linejoin="round"/></svg>
<div class="ax r" style="left:138px;top:441px;width:28px;height:16px;line-height:16px;letter-spacing:0.4px;">dB</div>
<div class="ax r" style="left:138px;top:461px;width:28px;height:16px;line-height:16px;letter-spacing:0.4px;">6</div>
<div class="ax r" style="left:138px;top:481px;width:28px;height:16px;line-height:16px;letter-spacing:0.4px;">0</div>
<div class="ax r" style="left:138px;top:501px;width:28px;height:16px;line-height:16px;letter-spacing:0.4px;">-6</div>
<div class="ax r" style="left:138px;top:521px;width:28px;height:16px;line-height:16px;letter-spacing:0.4px;">-12</div>
<div class="ax r" style="left:138px;top:541px;width:28px;height:16px;line-height:16px;letter-spacing:0.4px;">-18</div>
<div class="ax r" style="left:138px;top:561px;width:28px;height:16px;line-height:16px;letter-spacing:0.4px;">-24</div>
<div class="ax r" style="left:138px;top:581px;width:28px;height:16px;line-height:16px;letter-spacing:0.4px;">-30</div>
<div class="ax r" style="left:138px;top:601px;width:28px;height:16px;line-height:16px;letter-spacing:0.4px;">-36</div>
<div class="ax t" style="left:153px;top:626px;width:60px;height:14px;line-height:14px;">5 Hz</div>
<div class="ax t" style="left:197px;top:626px;width:60px;height:14px;line-height:14px;">10</div>
<div class="ax t" style="left:320px;top:626px;width:60px;height:14px;line-height:14px;">50</div>
<div class="ax t" style="left:373px;top:626px;width:60px;height:14px;line-height:14px;">100</div>
<div class="ax t" style="left:496px;top:626px;width:60px;height:14px;line-height:14px;">500</div>
<div class="ax t" style="left:549px;top:626px;width:60px;height:14px;line-height:14px;">1000</div>
<div class="ax t" style="left:590px;top:626px;width:60px;height:14px;line-height:14px;">2000</div>
<svg style="left:594px;top:418px" width="23" height="12" viewBox="0 0 23 12"><path d="M1 5 H7 L9 1.5 H15 L18 5 H21.5 V9 H1 Z" fill="#f4f4f4" stroke="#d0d0d0" stroke-width="0.6"/><path d="M9.5 2.5 H14.5 L16.5 5 H8.5Z" fill="#a0a0a0"/><rect x="0.5" y="8.5" width="21" height="1.2" fill="#000"/><circle cx="5" cy="9" r="1.8" fill="#000"/><circle cx="17" cy="9" r="1.8" fill="#000"/></svg>
<div class="cb" style="left:619px;top:417px;width:13px;height:13px;"></div>
<svg style="left:619px;top:417px" width="13" height="13"><path d="M3 6 L5.5 9 L10 3.5" stroke="#000" stroke-width="2" fill="none"/></svg>
<div class="gp" style="left:641px;top:406px;width:502px;height:238px;"></div>
<div class="btn" style="left:648px;top:414px;width:37px;height:13px;line-height:13px;font-size:11px;letter-spacing:-0.2px;height:15px;">Clear</div>
<div class="btn" style="left:689px;top:414px;width:42px;height:13px;line-height:13px;font-size:11px;letter-spacing:-0.2px;height:15px;">Cursor</div>
<div class="gt" style="left:643px;top:416px;width:502px;height:16px;line-height:16px;">Impedance Response (Ohms/Hz)</div>
<svg style="left:674px;top:438px" width="468" height="189" viewBox="0 0 468 189" shape-rendering="crispEdges"><rect x="0" y="0" width="462" height="183" fill="#000"/><rect x="0" y="5" width="462" height="1" fill="#9a9a9a"/><rect x="0" y="21" width="462" height="1" fill="#9a9a9a"/><rect x="0" y="37" width="462" height="1" fill="#9a9a9a"/><rect x="0" y="53" width="462" height="1" fill="#9a9a9a"/><rect x="0" y="69" width="462" height="1" fill="#9a9a9a"/><rect x="0" y="85" width="462" height="1" fill="#9a9a9a"/><rect x="0" y="101" width="462" height="1" fill="#9a9a9a"/><rect x="0" y="117" width="462" height="1" fill="#9a9a9a"/><rect x="0" y="133" width="462" height="1" fill="#9a9a9a"/><rect x="0" y="149" width="462" height="1" fill="#9a9a9a"/><rect x="0" y="165" width="462" height="1" fill="#9a9a9a"/><rect x="1" y="0" width="1" height="183" fill="#9a9a9a"/><rect x="1" y="183" width="1" height="3" fill="#e8e8e8"/><rect x="15" y="0" width="1" height="183" fill="#9a9a9a"/><rect x="15" y="183" width="1" height="3" fill="#e8e8e8"/><rect x="27" y="0" width="1" height="183" fill="#9a9a9a"/><rect x="27" y="183" width="1" height="3" fill="#e8e8e8"/><rect x="37" y="0" width="1" height="183" fill="#9a9a9a"/><rect x="37" y="183" width="1" height="3" fill="#e8e8e8"/><rect x="46" y="0" width="1" height="183" fill="#9a9a9a"/><rect x="46" y="183" width="1" height="3" fill="#e8e8e8"/><rect x="54" y="0" width="1" height="183" fill="#9a9a9a"/><rect x="54" y="183" width="1" height="3" fill="#e8e8e8"/><rect x="108" y="0" width="1" height="183" fill="#9a9a9a"/><rect x="108" y="183" width="1" height="3" fill="#e8e8e8"/><rect x="139" y="0" width="1" height="183" fill="#9a9a9a"/><rect x="139" y="183" width="1" height="3" fill="#e8e8e8"/><rect x="161" y="0" width="1" height="183" fill="#9a9a9a"/><rect x="161" y="183" width="1" height="3" fill="#e8e8e8"/><rect x="178" y="0" width="1" height="183" fill="#9a9a9a"/><rect x="178" y="183" width="1" height="3" fill="#e8e8e8"/><rect x="192" y="0" width="1" height="183" fill="#9a9a9a"/><rect x="192" y="183" width="1" height="3" fill="#e8e8e8"/><rect x="203" y="0" width="1" height="183" fill="#9a9a9a"/><rect x="203" y="183" width="1" height="3" fill="#e8e8e8"/><rect x="214" y="0" width="1" height="183" fill="#9a9a9a"/><rect x="214" y="183" width="1" height="3" fill="#e8e8e8"/><rect x="223" y="0" width="1" height="183" fill="#9a9a9a"/><rect x="223" y="183" width="1" height="3" fill="#e8e8e8"/><rect x="231" y="0" width="1" height="183" fill="#9a9a9a"/><rect x="231" y="183" width="1" height="3" fill="#e8e8e8"/><rect x="284" y="0" width="1" height="183" fill="#9a9a9a"/><rect x="284" y="183" width="1" height="3" fill="#e8e8e8"/><rect x="315" y="0" width="1" height="183" fill="#9a9a9a"/><rect x="315" y="183" width="1" height="3" fill="#e8e8e8"/><rect x="337" y="0" width="1" height="183" fill="#9a9a9a"/><rect x="337" y="183" width="1" height="3" fill="#e8e8e8"/><rect x="354" y="0" width="1" height="183" fill="#9a9a9a"/><rect x="354" y="183" width="1" height="3" fill="#e8e8e8"/><rect x="368" y="0" width="1" height="183" fill="#9a9a9a"/><rect x="368" y="183" width="1" height="3" fill="#e8e8e8"/><rect x="380" y="0" width="1" height="183" fill="#9a9a9a"/><rect x="380" y="183" width="1" height="3" fill="#e8e8e8"/><rect x="390" y="0" width="1" height="183" fill="#9a9a9a"/><rect x="390" y="183" width="1" height="3" fill="#e8e8e8"/><rect x="399" y="0" width="1" height="183" fill="#9a9a9a"/><rect x="399" y="183" width="1" height="3" fill="#e8e8e8"/><rect x="407" y="0" width="1" height="183" fill="#9a9a9a"/><rect x="407" y="183" width="1" height="3" fill="#e8e8e8"/><rect x="460" y="0" width="1" height="183" fill="#9a9a9a"/><rect x="460" y="183" width="1" height="3" fill="#e8e8e8"/><rect x="0" y="0" width="462" height="2" fill="#d2d2d2"/><rect x="0" y="181" width="462" height="2" fill="#d2d2d2"/><rect x="0" y="0" width="2" height="183" fill="#d2d2d2"/><rect x="460" y="0" width="2" height="183" fill="#d2d2d2"/><rect x="-3" y="5" width="3" height="1" fill="#fff"/><rect x="462" y="5" width="3" height="1" fill="#fff"/><rect x="-3" y="21" width="3" height="1" fill="#fff"/><rect x="462" y="21" width="3" height="1" fill="#fff"/><rect x="-3" y="37" width="3" height="1" fill="#fff"/><rect x="462" y="37" width="3" height="1" fill="#fff"/><rect x="-3" y="53" width="3" height="1" fill="#fff"/><rect x="462" y="53" width="3" height="1" fill="#fff"/><rect x="-3" y="69" width="3" height="1" fill="#fff"/><rect x="462" y="69" width="3" height="1" fill="#fff"/><rect x="-3" y="85" width="3" height="1" fill="#fff"/><rect x="462" y="85" width="3" height="1" fill="#fff"/><rect x="-3" y="101" width="3" height="1" fill="#fff"/><rect x="462" y="101" width="3" height="1" fill="#fff"/><rect x="-3" y="117" width="3" height="1" fill="#fff"/><rect x="462" y="117" width="3" height="1" fill="#fff"/><rect x="-3" y="133" width="3" height="1" fill="#fff"/><rect x="462" y="133" width="3" height="1" fill="#fff"/><rect x="-3" y="149" width="3" height="1" fill="#fff"/><rect x="462" y="149" width="3" height="1" fill="#fff"/><rect x="-3" y="165" width="3" height="1" fill="#fff"/><rect x="462" y="165" width="3" height="1" fill="#fff"/><rect x="-3" y="181" width="3" height="1" fill="#fff"/><rect x="462" y="181" width="3" height="1" fill="#fff"/></svg>
<svg style="left:675px;top:440px;overflow:hidden" width="460" height="180" viewBox="675 440 460 180"><path d="M675.0 611.0 L705.5 608.8 L720.5 605.0 L735.5 600.3 L743.0 592.8 L748.6 583.4 L750.5 580.6 L754.3 584.4 L759.9 595.6 L769.3 604.0 L780.5 608.8 L795.5 612.0 L812.4 612.5 L836.8 609.7 L852.7 603.0 L859.3 593.8 L863.0 586.3 L864.9 584.4 L866.8 588.0 L872.4 596.6 L880.0 603.0 L893.0 607.8 L908.0 610.3 L920.0 611.5 L934.0 612.5" fill="none" stroke="#e83030" stroke-width="1.1" stroke-linejoin="round"/><path d="M675.0 614.5 L724.3 614.5 L728.0 613.5 L780.5 613.5 L812.4 611.6 L836.8 608.8 L852.7 603.0 L861.1 588.0 L866.8 567.5 L869.6 559.6 L872.4 567.5 L876.0 586.3 L880.0 596.6 L885.5 601.3 L893.0 606.0 L908.0 609.7 L920.0 611.3 L934.0 612.5" fill="none" stroke="#f0f040" stroke-width="1.1" stroke-linejoin="round"/><path d="M675.1 612.5 L705.5 611.0 L728.0 608.8 L743.0 604.0 L748.6 593.8 L751.4 578.8 L753.3 571.6 L755.2 573.0 L758.0 588.0 L761.8 599.4 L769.3 607.8 L780.5 612.5 L799.3 614.0 L812.4 612.5 L836.8 608.8 L852.7 603.0 L859.3 592.0 L864.0 577.0 L866.2 570.3 L868.6 577.0 L872.4 588.0 L878.0 598.4 L887.4 605.0 L908.0 610.5 L920.0 611.5 L934.7 612.5 L961.0 612.5 L963.0 613.5 L1028.0 613.5 L1030.0 614.5 L1068.0 614.5 L1070.0 613.5 L1124.0 613.5 L1126.0 612.5 L1135.0 612.5" fill="none" stroke="#30e840" stroke-width="1.1" stroke-linejoin="round"/></svg>
<div class="ax r" style="left:641px;top:435px;width:28px;height:16px;line-height:16px;letter-spacing:0.4px;"><b>Ω</b></div>
<div class="ax r" style="left:641px;top:451px;width:28px;height:16px;line-height:16px;letter-spacing:0.4px;">100</div>
<div class="ax r" style="left:641px;top:467px;width:28px;height:16px;line-height:16px;letter-spacing:0.4px;">90</div>
<div class="ax r" style="left:641px;top:483px;width:28px;height:16px;line-height:16px;letter-spacing:0.4px;">80</div>
<div class="ax r" style="left:641px;top:499px;width:28px;height:16px;line-height:16px;letter-spacing:0.4px;">70</div>
<div class="ax r" style="left:641px;top:515px;width:28px;height:16px;line-height:16px;letter-spacing:0.4px;">60</div>
<div class="ax r" style="left:641px;top:531px;width:28px;height:16px;line-height:16px;letter-spacing:0.4px;">50</div>
<div class="ax r" style="left:641px;top:547px;width:28px;height:16px;line-height:16px;letter-spacing:0.4px;">40</div>
<div class="ax r" style="left:641px;top:563px;width:28px;height:16px;line-height:16px;letter-spacing:0.4px;">30</div>
<div class="ax r" style="left:641px;top:579px;width:28px;height:16px;line-height:16px;letter-spacing:0.4px;">20</div>
<div class="ax r" style="left:641px;top:595px;width:28px;height:16px;line-height:16px;letter-spacing:0.4px;">10</div>
<div class="ax r" style="left:641px;top:611px;width:28px;height:16px;line-height:16px;letter-spacing:0.4px;">0</div>
<div class="ax t" style="left:656px;top:626px;width:60px;height:14px;line-height:14px;">5 Hz</div>
<div class="ax t" style="left:700px;top:626px;width:60px;height:14px;line-height:14px;">10</div>
<div class="ax t" style="left:823px;top:626px;width:60px;height:14px;line-height:14px;">50</div>
<div class="ax t" style="left:876px;top:626px;width:60px;height:14px;line-height:14px;">100</div>
<div class="ax t" style="left:999px;top:626px;width:60px;height:14px;line-height:14px;">500</div>
<div class="ax t" style="left:1052px;top:626px;width:60px;height:14px;line-height:14px;">1000</div>
<div class="ax t" style="left:1093px;top:626px;width:60px;height:14px;line-height:14px;">2000</div>
<div class="gr r" style="left:1000px;top:411px;width:135px;height:13px;line-height:13px;">Max Z: 30,3 ohms</div>
<div class="gr r" style="left:1000px;top:424px;width:135px;height:13px;line-height:13px;">Min Z: 2,9 ohms</div>
<div class="gp" style="left:138px;top:645px;width:502px;height:238px;"></div>
<div class="btn" style="left:145px;top:653px;width:37px;height:13px;line-height:13px;font-size:11px;letter-spacing:-0.2px;height:15px;">Clear</div>
<div class="btn" style="left:186px;top:653px;width:42px;height:13px;line-height:13px;font-size:11px;letter-spacing:-0.2px;height:15px;">Cursor</div>
<div class="gt" style="left:140px;top:655px;width:502px;height:16px;line-height:16px;">Maximum Acoustic Power (dBPWL/Hz)</div>
<svg style="left:171px;top:677px" width="468" height="189" viewBox="0 0 468 189" shape-rendering="crispEdges"><rect x="0" y="0" width="462" height="183" fill="#000"/><rect x="0" y="11" width="462" height="1" fill="#9a9a9a"/><rect x="0" y="21" width="462" height="1" fill="#9a9a9a"/><rect x="0" y="31" width="462" height="1" fill="#9a9a9a"/><rect x="0" y="41" width="462" height="1" fill="#9a9a9a"/><rect x="0" y="51" width="462" height="1" fill="#9a9a9a"/><rect x="0" y="61" width="462" height="1" fill="#9a9a9a"/><rect x="0" y="71" width="462" height="1" fill="#9a9a9a"/><rect x="0" y="81" width="462" height="1" fill="#9a9a9a"/><rect x="0" y="91" width="462" height="1" fill="#9a9a9a"/><rect x="0" y="101" width="462" height="1" fill="#9a9a9a"/><rect x="0" y="111" width="462" height="1" fill="#9a9a9a"/><rect x="0" y="121" width="462" height="1" fill="#9a9a9a"/><rect x="0" y="131" width="462" height="1" fill="#9a9a9a"/><rect x="0" y="141" width="462" height="1" fill="#9a9a9a"/><rect x="0" y="151" width="462" height="1" fill="#9a9a9a"/><rect x="0" y="161" width="462" height="1" fill="#9a9a9a"/><rect x="0" y="171" width="462" height="1" fill="#9a9a9a"/><rect x="1" y="0" width="1" height="183" fill="#9a9a9a"/><rect x="1" y="183" width="1" height="3" fill="#e8e8e8"/><rect x="15" y="0" width="1" height="183" fill="#9a9a9a"/><rect x="15" y="183" width="1" height="3" fill="#e8e8e8"/><rect x="27" y="0" width="1" height="183" fill="#9a9a9a"/><rect x="27" y="183" width="1" height="3" fill="#e8e8e8"/><rect x="37" y="0" width="1" height="183" fill="#9a9a9a"/><rect x="37" y="183" width="1" height="3" fill="#e8e8e8"/><rect x="46" y="0" width="1" height="183" fill="#9a9a9a"/><rect x="46" y="183" width="1" height="3" fill="#e8e8e8"/><rect x="54" y="0" width="1" height="183" fill="#9a9a9a"/><rect x="54" y="183" width="1" height="3" fill="#e8e8e8"/><rect x="108" y="0" width="1" height="183" fill="#9a9a9a"/><rect x="108" y="183" width="1" height="3" fill="#e8e8e8"/><rect x="139" y="0" width="1" height="183" fill="#9a9a9a"/><rect x="139" y="183" width="1" height="3" fill="#e8e8e8"/><rect x="161" y="0" width="1" height="183" fill="#9a9a9a"/><rect x="161" y="183" width="1" height="3" fill="#e8e8e8"/><rect x="178" y="0" width="1" height="183" fill="#9a9a9a"/><rect x="178" y="183" width="1" height="3" fill="#e8e8e8"/><rect x="192" y="0" width="1" height="183" fill="#9a9a9a"/><rect x="192" y="183" width="1" height="3" fill="#e8e8e8"/><rect x="203" y="0" width="1" height="183" fill="#9a9a9a"/><rect x="203" y="183" width="1" height="3" fill="#e8e8e8"/><rect x="214" y="0" width="1" height="183" fill="#9a9a9a"/><rect x="214" y="183" width="1" height="3" fill="#e8e8e8"/><rect x="223" y="0" width="1" height="183" fill="#9a9a9a"/><rect x="223" y="183" width="1" height="3" fill="#e8e8e8"/><rect x="231" y="0" width="1" height="183" fill="#9a9a9a"/><rect x="231" y="183" width="1" height="3" fill="#e8e8e8"/><rect x="284" y="0" width="1" height="183" fill="#9a9a9a"/><rect x="284" y="183" width="1" height="3" fill="#e8e8e8"/><rect x="315" y="0" width="1" height="183" fill="#9a9a9a"/><rect x="315" y="183" width="1" height="3" fill="#e8e8e8"/><rect x="337" y="0" width="1" height="183" fill="#9a9a9a"/><rect x="337" y="183" width="1" height="3" fill="#e8e8e8"/><rect x="354" y="0" width="1" height="183" fill="#9a9a9a"/><rect x="354" y="183" width="1" height="3" fill="#e8e8e8"/><rect x="368" y="0" width="1" height="183" fill="#9a9a9a"/><rect x="368" y="183" width="1" height="3" fill="#e8e8e8"/><rect x="380" y="0" width="1" height="183" fill="#9a9a9a"/><rect x="380" y="183" width="1" height="3" fill="#e8e8e8"/><rect x="390" y="0" width="1" height="183" fill="#9a9a9a"/><rect x="390" y="183" width="1" height="3" fill="#e8e8e8"/><rect x="399" y="0" width="1" height="183" fill="#9a9a9a"/><rect x="399" y="183" width="1" height="3" fill="#e8e8e8"/><rect x="407" y="0" width="1" height="183" fill="#9a9a9a"/><rect x="407" y="183" width="1" height="3" fill="#e8e8e8"/><rect x="460" y="0" width="1" height="183" fill="#9a9a9a"/><rect x="460" y="183" width="1" height="3" fill="#e8e8e8"/><rect x="0" y="0" width="462" height="2" fill="#d2d2d2"/><rect x="0" y="181" width="462" height="2" fill="#d2d2d2"/><rect x="0" y="0" width="2" height="183" fill="#d2d2d2"/><rect x="460" y="0" width="2" height="183" fill="#d2d2d2"/><rect x="-3" y="11" width="3" height="1" fill="#fff"/><rect x="462" y="11" width="3" height="1" fill="#fff"/><rect x="-3" y="31" width="3" height="1" fill="#fff"/><rect x="462" y="31" width="3" height="1" fill="#fff"/><rect x="-3" y="51" width="3" height="1" fill="#fff"/><rect x="462" y="51" width="3" height="1" fill="#fff"/><rect x="-3" y="71" width="3" height="1" fill="#fff"/><rect x="462" y="71" width="3" height="1" fill="#fff"/><rect x="-3" y="91" width="3" height="1" fill="#fff"/><rect x="462" y="91" width="3" height="1" fill="#fff"/><rect x="-3" y="111" width="3" height="1" fill="#fff"/><rect x="462" y="111" width="3" height="1" fill="#fff"/><rect x="-3" y="131" width="3" height="1" fill="#fff"/><rect x="462" y="131" width="3" height="1" fill="#fff"/><rect x="-3" y="151" width="3" height="1" fill="#fff"/><rect x="462" y="151" width="3" height="1" fill="#fff"/><rect x="-3" y="171" width="3" height="1" fill="#fff"/><rect x="462" y="171" width="3" height="1" fill="#fff"/></svg>
<svg style="left:172px;top:679px;overflow:hidden" width="460" height="180" viewBox="172 679 460 180"><path d="M172.0 728.5 L634.0 728.5" fill="none" stroke="#90e890" stroke-width="1.0" stroke-linejoin="round"/><path d="M242.7 858.1 L252.5 840.6 L263.4 821.0 L278.8 792.5 L289.7 768.4 L300.6 740.0 L307.2 713.8 L310.5 701.7 L318.1 709.4 L326.9 714.8 L336.7 718.6 L348.8 716.4 L361.9 710.5 L375.0 702.8 L388.1 695.8 L401.3 687.5 L411.1 679.8 L414.0 677.0" fill="none" stroke="#e83030" stroke-width="1.1" stroke-linejoin="round"/><path d="M273.3 858.1 L283.1 842.8 L296.3 823.1 L309.4 803.5 L322.5 783.8 L333.5 768.4 L348.8 748.8 L364.1 728.0 L375.0 717.0 L388.1 702.8 L401.3 691.9 L415.5 679.8 L418.0 677.0" fill="none" stroke="#f0f040" stroke-width="1.1" stroke-linejoin="round"/><path d="M172.7 753.1 L195.6 753.8 L226.3 754.9 L241.6 753.8 L252.5 751.0 L262.4 745.5 L270.0 736.7 L275.5 728.0 L281.0 716.0 L285.3 702.8 L288.6 689.7 L290.4 679.8 L291.0 676.0" fill="none" stroke="#30e840" stroke-width="1.1" stroke-linejoin="round"/><path d="M302.0 676.0 L302.4 679.2 L303.9 687.5 L307.2 695.2 L310.5 700.6 L318.1 707.2 L326.9 711.6 L337.8 714.2 L348.8 713.1 L361.9 709.4 L375.0 702.8 L388.1 696.3 L401.3 688.6 L412.2 680.5 L416.0 677.0" fill="none" stroke="#30e840" stroke-width="1.1" stroke-linejoin="round"/></svg>
<div class="ax r" style="left:138px;top:680px;width:28px;height:16px;line-height:16px;letter-spacing:0.4px;">dB</div>
<div class="ax r" style="left:138px;top:700px;width:28px;height:16px;line-height:16px;letter-spacing:0.4px;">124</div>
<div class="ax r" style="left:138px;top:720px;width:28px;height:16px;line-height:16px;font-weight:bold;letter-spacing:0.4px;">118</div>
<div class="ax r" style="left:138px;top:740px;width:28px;height:16px;line-height:16px;letter-spacing:0.4px;">112</div>
<div class="ax r" style="left:138px;top:760px;width:28px;height:16px;line-height:16px;letter-spacing:0.4px;">106</div>
<div class="ax r" style="left:138px;top:780px;width:28px;height:16px;line-height:16px;letter-spacing:0.4px;">100</div>
<div class="ax r" style="left:138px;top:800px;width:28px;height:16px;line-height:16px;letter-spacing:0.4px;">94</div>
<div class="ax r" style="left:138px;top:820px;width:28px;height:16px;line-height:16px;letter-spacing:0.4px;">88</div>
<div class="ax r" style="left:138px;top:840px;width:28px;height:16px;line-height:16px;letter-spacing:0.4px;">82</div>
<div class="ax t" style="left:153px;top:865px;width:60px;height:14px;line-height:14px;">5 Hz</div>
<div class="ax t" style="left:197px;top:865px;width:60px;height:14px;line-height:14px;">10</div>
<div class="ax t" style="left:320px;top:865px;width:60px;height:14px;line-height:14px;">50</div>
<div class="ax t" style="left:373px;top:865px;width:60px;height:14px;line-height:14px;">100</div>
<div class="ax t" style="left:496px;top:865px;width:60px;height:14px;line-height:14px;">500</div>
<div class="ax t" style="left:549px;top:865px;width:60px;height:14px;line-height:14px;">1000</div>
<div class="ax t" style="left:590px;top:865px;width:60px;height:14px;line-height:14px;">2000</div>
<div class="gr r" style="left:500px;top:656px;width:133px;height:13px;line-height:13px;letter-spacing:-0.3px;">Therm. Limit: 118 dBPWL</div>
<div class="gp" style="left:641px;top:645px;width:502px;height:238px;"></div>
<div class="btn" style="left:648px;top:653px;width:37px;height:13px;line-height:13px;font-size:11px;letter-spacing:-0.2px;height:15px;">Clear</div>
<div class="btnf" style="left:688px;top:652px;width:44px;height:15px;line-height:15px;font-size:11px;letter-spacing:-0.2px;height:17px;">Cursor</div>
<div class="gt" style="left:643px;top:655px;width:502px;height:16px;line-height:16px;">Group Delay (Milliseconds/Hz)</div>
<svg style="left:674px;top:677px" width="468" height="189" viewBox="0 0 468 189" shape-rendering="crispEdges"><rect x="0" y="0" width="462" height="183" fill="#000"/><rect x="0" y="11" width="462" height="1" fill="#9a9a9a"/><rect x="0" y="21" width="462" height="1" fill="#9a9a9a"/><rect x="0" y="31" width="462" height="1" fill="#9a9a9a"/><rect x="0" y="41" width="462" height="1" fill="#9a9a9a"/><rect x="0" y="51" width="462" height="1" fill="#9a9a9a"/><rect x="0" y="61" width="462" height="1" fill="#9a9a9a"/><rect x="0" y="71" width="462" height="1" fill="#9a9a9a"/><rect x="0" y="81" width="462" height="1" fill="#9a9a9a"/><rect x="0" y="91" width="462" height="1" fill="#9a9a9a"/><rect x="0" y="101" width="462" height="1" fill="#9a9a9a"/><rect x="0" y="111" width="462" height="1" fill="#9a9a9a"/><rect x="0" y="121" width="462" height="1" fill="#9a9a9a"/><rect x="0" y="131" width="462" height="1" fill="#9a9a9a"/><rect x="0" y="141" width="462" height="1" fill="#9a9a9a"/><rect x="0" y="151" width="462" height="1" fill="#9a9a9a"/><rect x="0" y="161" width="462" height="1" fill="#9a9a9a"/><rect x="0" y="171" width="462" height="1" fill="#9a9a9a"/><rect x="1" y="0" width="1" height="183" fill="#9a9a9a"/><rect x="1" y="183" width="1" height="3" fill="#e8e8e8"/><rect x="15" y="0" width="1" height="183" fill="#9a9a9a"/><rect x="15" y="183" width="1" height="3" fill="#e8e8e8"/><rect x="27" y="0" width="1" height="183" fill="#9a9a9a"/><rect x="27" y="183" width="1" height="3" fill="#e8e8e8"/><rect x="37" y="0" width="1" height="183" fill="#9a9a9a"/><rect x="37" y="183" width="1" height="3" fill="#e8e8e8"/><rect x="46" y="0" width="1" height="183" fill="#9a9a9a"/><rect x="46" y="183" width="1" height="3" fill="#e8e8e8"/><rect x="54" y="0" width="1" height="183" fill="#9a9a9a"/><rect x="54" y="183" width="1" height="3" fill="#e8e8e8"/><rect x="108" y="0" width="1" height="183" fill="#9a9a9a"/><rect x="108" y="183" width="1" height="3" fill="#e8e8e8"/><rect x="139" y="0" width="1" height="183" fill="#9a9a9a"/><rect x="139" y="183" width="1" height="3" fill="#e8e8e8"/><rect x="161" y="0" width="1" height="183" fill="#9a9a9a"/><rect x="161" y="183" width="1" height="3" fill="#e8e8e8"/><rect x="178" y="0" width="1" height="183" fill="#9a9a9a"/><rect x="178" y="183" width="1" height="3" fill="#e8e8e8"/><rect x="192" y="0" width="1" height="183" fill="#9a9a9a"/><rect x="192" y="183" width="1" height="3" fill="#e8e8e8"/><rect x="203" y="0" width="1" height="183" fill="#9a9a9a"/><rect x="203" y="183" width="1" height="3" fill="#e8e8e8"/><rect x="214" y="0" width="1" height="183" fill="#9a9a9a"/><rect x="214" y="183" width="1" height="3" fill="#e8e8e8"/><rect x="223" y="0" width="1" height="183" fill="#9a9a9a"/><rect x="223" y="183" width="1" height="3" fill="#e8e8e8"/><rect x="231" y="0" width="1" height="183" fill="#9a9a9a"/><rect x="231" y="183" width="1" height="3" fill="#e8e8e8"/><rect x="284" y="0" width="1" height="183" fill="#9a9a9a"/><rect x="284" y="183" width="1" height="3" fill="#e8e8e8"/><rect x="315" y="0" width="1" height="183" fill="#9a9a9a"/><rect x="315" y="183" width="1" height="3" fill="#e8e8e8"/><rect x="337" y="0" width="1" height="183" fill="#9a9a9a"/><rect x="337" y="183" width="1" height="3" fill="#e8e8e8"/><rect x="354" y="0" width="1" height="183" fill="#9a9a9a"/><rect x="354" y="183" width="1" height="3" fill="#e8e8e8"/><rect x="368" y="0" width="1" height="183" fill="#9a9a9a"/><rect x="368" y="183" width="1" height="3" fill="#e8e8e8"/><rect x="380" y="0" width="1" height="183" fill="#9a9a9a"/><rect x="380" y="183" width="1" height="3" fill="#e8e8e8"/><rect x="390" y="0" width="1" height="183" fill="#9a9a9a"/><rect x="390" y="183" width="1" height="3" fill="#e8e8e8"/><rect x="399" y="0" width="1" height="183" fill="#9a9a9a"/><rect x="399" y="183" width="1" height="3" fill="#e8e8e8"/><rect x="407" y="0" width="1" height="183" fill="#9a9a9a"/><rect x="407" y="183" width="1" height="3" fill="#e8e8e8"/><rect x="460" y="0" width="1" height="183" fill="#9a9a9a"/><rect x="460" y="183" width="1" height="3" fill="#e8e8e8"/><rect x="0" y="0" width="462" height="2" fill="#d2d2d2"/><rect x="0" y="181" width="462" height="2" fill="#d2d2d2"/><rect x="0" y="0" width="2" height="183" fill="#d2d2d2"/><rect x="460" y="0" width="2" height="183" fill="#d2d2d2"/><rect x="-3" y="1" width="3" height="1" fill="#fff"/><rect x="462" y="1" width="3" height="1" fill="#fff"/><rect x="-3" y="21" width="3" height="1" fill="#fff"/><rect x="462" y="21" width="3" height="1" fill="#fff"/><rect x="-3" y="41" width="3" height="1" fill="#fff"/><rect x="462" y="41" width="3" height="1" fill="#fff"/><rect x="-3" y="61" width="3" height="1" fill="#fff"/><rect x="462" y="61" width="3" height="1" fill="#fff"/><rect x="-3" y="81" width="3" height="1" fill="#fff"/><rect x="462" y="81" width="3" height="1" fill="#fff"/><rect x="-3" y="101" width="3" height="1" fill="#fff"/><rect x="462" y="101" width="3" height="1" fill="#fff"/><rect x="-3" y="121" width="3" height="1" fill="#fff"/><rect x="462" y="121" width="3" height="1" fill="#fff"/><rect x="-3" y="141" width="3" height="1" fill="#fff"/><rect x="462" y="141" width="3" height="1" fill="#fff"/><rect x="-3" y="161" width="3" height="1" fill="#fff"/><rect x="462" y="161" width="3" height="1" fill="#fff"/><rect x="-3" y="181" width="3" height="1" fill="#fff"/><rect x="462" y="181" width="3" height="1" fill="#fff"/></svg>
<svg style="left:675px;top:679px;overflow:hidden" width="460" height="180" viewBox="675 679 460 180"><path d="M727.0 677.0 L729.0 678.4 L743.3 689.0 L758.7 698.8 L771.9 708.7 L785.0 717.5 L798.2 724.1 L811.4 731.8 L822.4 740.6 L831.2 750.5 L837.8 761.5 L846.6 776.9 L853.2 789.0 L862.0 803.2 L870.8 815.3 L879.6 825.2 L890.5 834.0 L903.7 840.6 L919.1 846.8 L925.0 848.0 L940.0 851.2" fill="none" stroke="#e83030" stroke-width="1.1" stroke-linejoin="round"/><path d="M675.2 822.6 L716.9 822.6 L719.1 821.3 L754.3 820.8 L771.9 819.7 L793.8 818.2 L811.4 816.9 L824.6 815.3 L846.6 815.3 L855.4 816.9 L866.4 819.7 L877.4 825.2 L890.5 833.6 L903.7 840.2 L919.1 845.4 L925.0 847.6 L940.0 851.0 L958.0 854.2" fill="none" stroke="#f0f040" stroke-width="1.1" stroke-linejoin="round"/><path d="M675.2 721.9 L684.0 717.5 L692.7 708.7 L703.7 696.6 L710.3 686.8 L714.7 679.7 L716.0 677.0" fill="none" stroke="#30e840" stroke-width="1.1" stroke-linejoin="round"/><path d="M788.0 676.0 L788.4 678.4 L791.6 695.5 L796.0 719.7 L802.6 739.5 L809.2 754.9 L813.6 764.8 L824.6 779.0 L835.6 789.0 L851.0 798.8 L864.2 809.8 L877.4 823.0 L890.5 834.0 L903.7 840.6 L919.1 846.1 L925.0 847.8 L940.0 851.0 L958.0 854.2 L975.0 855.8 L995.0 856.5 L1032.0 857.5 L1036.0 858.5 L1135.0 858.5" fill="none" stroke="#30e840" stroke-width="1.1" stroke-linejoin="round"/><g shape-rendering="crispEdges" fill="none" stroke="#fff"><rect x="738" y="678" width="40" height="2" fill="#fff" stroke="none"/><rect x="750.5" y="679.5" width="15" height="7"/><path d="M757.5 679 V698"/></g></svg>
<div class="ax r" style="left:641px;top:670px;width:28px;height:16px;line-height:16px;letter-spacing:0.4px;">ms</div>
<div class="ax r" style="left:641px;top:690px;width:28px;height:16px;line-height:16px;letter-spacing:0.4px;">16</div>
<div class="ax r" style="left:641px;top:710px;width:28px;height:16px;line-height:16px;letter-spacing:0.4px;">14</div>
<div class="ax r" style="left:641px;top:730px;width:28px;height:16px;line-height:16px;letter-spacing:0.4px;">12</div>
<div class="ax r" style="left:641px;top:750px;width:28px;height:16px;line-height:16px;letter-spacing:0.4px;">10</div>
<div class="ax r" style="left:641px;top:770px;width:28px;height:16px;line-height:16px;letter-spacing:0.4px;">8</div>
<div class="ax r" style="left:641px;top:790px;width:28px;height:16px;line-height:16px;letter-spacing:0.4px;">6</div>
<div class="ax r" style="left:641px;top:810px;width:28px;height:16px;line-height:16px;letter-spacing:0.4px;">4</div>
<div class="ax r" style="left:641px;top:830px;width:28px;height:16px;line-height:16px;letter-spacing:0.4px;">2</div>
<div class="ax r" style="left:641px;top:850px;width:28px;height:16px;line-height:16px;letter-spacing:0.4px;">0</div>
<div class="ax t" style="left:656px;top:865px;width:60px;height:14px;line-height:14px;">5 Hz</div>
<div class="ax t" style="left:700px;top:865px;width:60px;height:14px;line-height:14px;">10</div>
<div class="ax t" style="left:823px;top:865px;width:60px;height:14px;line-height:14px;">50</div>
<div class="ax t" style="left:876px;top:865px;width:60px;height:14px;line-height:14px;">100</div>
<div class="ax t" style="left:999px;top:865px;width:60px;height:14px;line-height:14px;">500</div>
<div class="ax t" style="left:1052px;top:865px;width:60px;height:14px;line-height:14px;">1000</div>
<div class="ax t" style="left:1093px;top:865px;width:60px;height:14px;line-height:14px;">2000</div>
<div style="left:0px;top:990px;width:1280px;height:34px;background:linear-gradient(180deg,#3c84f4 0%,#3274ea 9%,#2862de 15%,#2660dc 60%,#245bd6 85%,#1d4cba 100%);"></div>
<div style="left:0px;top:994px;width:96px;height:30px;background:linear-gradient(180deg,#6cba6c 0%,#3f9a3f 12%,#3a953a 55%,#2f842f 90%,#2a742a 100%);border-radius:0 6px 6px 0 / 0 15px 15px 0;box-shadow:inset -3px 0 4px rgba(0,60,0,.35),1px 0 2px rgba(0,0,60,.7);"></div>
<svg style="left:10px;top:999px" width="20" height="19" viewBox="0 0 20 19"><path d="M2 2.5 Q5.5 0.8 9 2.5 L8.3 8.6 Q5 7 1.2 8.6 Z" fill="#e8642c"/><path d="M10.3 3 Q14 4.8 18.5 2.5 L17.8 8.7 Q14 10.8 9.6 9 Z" fill="#80c434"/><path d="M1 10 Q5 8.4 8.1 10 L7.5 16.2 Q4.4 14.6 0.4 16.2 Z" fill="#4c8cec"/><path d="M9.4 10.5 Q13.3 12.4 17.6 10.2 L17 16.4 Q13 18.4 8.8 16.7 Z" fill="#f4c424"/></svg>
<div class="l" style="left:35px;top:994px;width:60px;height:30px;line-height:30px;color:#fff;font-weight:bold;font-style:italic;font-size:19px;text-shadow:1px 1px 1px rgba(0,0,0,.5);transform:scaleX(.84);transform-origin:0 0;">пуск</div>
<div style="left:106px;top:1000px;width:2px;height:2px;background:#1838a8;"></div>
<div style="left:109px;top:1004px;width:2px;height:2px;background:#1838a8;"></div>
<div style="left:106px;top:1008px;width:2px;height:2px;background:#1838a8;"></div>
<div style="left:109px;top:1012px;width:2px;height:2px;background:#1838a8;"></div>
<div style="left:106px;top:1016px;width:2px;height:2px;background:#1838a8;"></div>
<div style="left:116px;top:998px;width:157px;height:24px;background:linear-gradient(180deg,#5a96f8 0%,#3f82f2 20%,#3a7cf0 70%,#3472e4 100%);border-radius:3px;"></div>
<svg style="left:125px;top:1000px" width="16" height="17" viewBox="0 0 16 17"><ellipse cx="8" cy="8.5" rx="7.3" ry="7.7" fill="#d81414"/><ellipse cx="7" cy="7" rx="5" ry="5.5" fill="#f03030" opacity=".7"/><ellipse cx="8" cy="8.5" rx="2.5" ry="5.2" fill="#3a7cf0"/></svg>
<div class="l" style="left:144.5px;top:998px;width:126px;height:23px;line-height:23px;color:#fff;font-size:11px;">Всё об автозвуке - Р…</div>
<div style="left:275px;top:998px;width:159px;height:24px;background:#1e50b8;border-radius:3px;box-shadow:inset 1px 1px 1px rgba(0,0,40,.45);"></div>
<svg style="left:285px;top:1001px" width="17" height="17" viewBox="0 0 17 17"><rect x="2" y="3" width="13" height="13" rx="3" fill="#080808"/><circle cx="5" cy="4" r="2.2" fill="#080808"/><circle cx="12" cy="4.5" r="2.4" fill="#080808"/><path d="M3.5 6 L7.5 2.5 L10 5 L7 9.5 L3.5 8.5 Z" fill="#c81890"/><path d="M9.5 3 L13 4 L12.5 7 L10 6.5 Z" fill="#e8d020"/><path d="M4 5.5 L9 6.5 L8 8 L4.5 7.5Z" fill="#e03828"/><path d="M11 7 L14 6 L12 10 L10.5 9.5 Z" fill="#40c040"/><path d="M5 9 L8 10 L7 11.5 L4.5 11Z" fill="#7030c0"/><rect x="5" y="12.5" width="2" height="3" fill="#fff"/><rect x="8" y="12.5" width="2" height="3" fill="#fff"/><rect x="11" y="13" width="1.5" height="2.5" fill="#fff"/></svg>
<div class="l" style="left:305.5px;top:998px;width:126px;height:23px;line-height:23px;color:#fff;font-size:11px;letter-spacing:-0.28px;">SpeakerShop Enclosu…</div>
<div style="left:1101px;top:1000px;width:2px;height:2px;background:#1838a8;"></div>
<div style="left:1104px;top:1004px;width:2px;height:2px;background:#1838a8;"></div>
<div style="left:1101px;top:1008px;width:2px;height:2px;background:#1838a8;"></div>
<div style="left:1104px;top:1012px;width:2px;height:2px;background:#1838a8;"></div>
<div style="left:1101px;top:1016px;width:2px;height:2px;background:#1838a8;"></div>
<div class="l" style="left:1114px;top:998px;width:20px;height:23px;line-height:23px;color:#fff;font-size:11px;">RU</div>
<div style="left:1137px;top:1002px;width:13px;height:12px;background:#ffffe4;border:1px solid #000;border-radius:1px;"></div>
<div style="left:1144px;top:1013px;width:3px;height:3px;background:#000;"></div>
<div class="t" style="left:1137px;top:1002px;width:13px;height:12px;line-height:12px;font-weight:bold;font-size:11px;">?</div>
<div style="left:1169px;top:994px;width:111px;height:30px;background:linear-gradient(180deg,#2aa4f4 0%,#1a94ec 12%,#1688e0 70%,#1478c8 100%);box-shadow:inset 1px 0 0 #0c3c90,inset 2px 0 0 #50b0f8;"></div>
<svg style="left:1160px;top:1000px" width="110" height="20" viewBox="0 0 110 20"><circle cx="9" cy="9" r="8.5" fill="#2c7ce8" stroke="#a8ccf8" stroke-width="0.9"/><path d="M11 5 L7 9 L11 13" stroke="#fff" stroke-width="2.2" fill="none"/><rect x="24" y="3" width="7" height="6" fill="none" stroke="#e84828" stroke-width="1.5"/><rect x="22" y="10" width="11" height="6" fill="none" stroke="#e84828" stroke-width="1.4"/><path d="M27.5 0.5 V3 M27.5 10 V16" stroke="#e84828" stroke-width="1.2"/><circle cx="44" cy="7" r="5.5" fill="#5a626c" stroke="#c4ccd4"/><circle cx="44" cy="7" r="2" fill="#1c1c1c"/><path d="M47 12 L52 15" stroke="#a0a8b8" stroke-width="2.5"/><circle cx="63" cy="9" r="8" fill="#f08418"/><circle cx="63" cy="9" r="8" fill="none" stroke="#c05808" stroke-width=".8"/><path d="M59 10 A4 4 0 1 1 63 14" stroke="#fff" stroke-width="2.4" fill="none"/></svg>
<div class="l" style="left:1238px;top:998px;width:32px;height:23px;line-height:23px;color:#fff;font-size:11px;">14:43</div>
</div></body></html>
